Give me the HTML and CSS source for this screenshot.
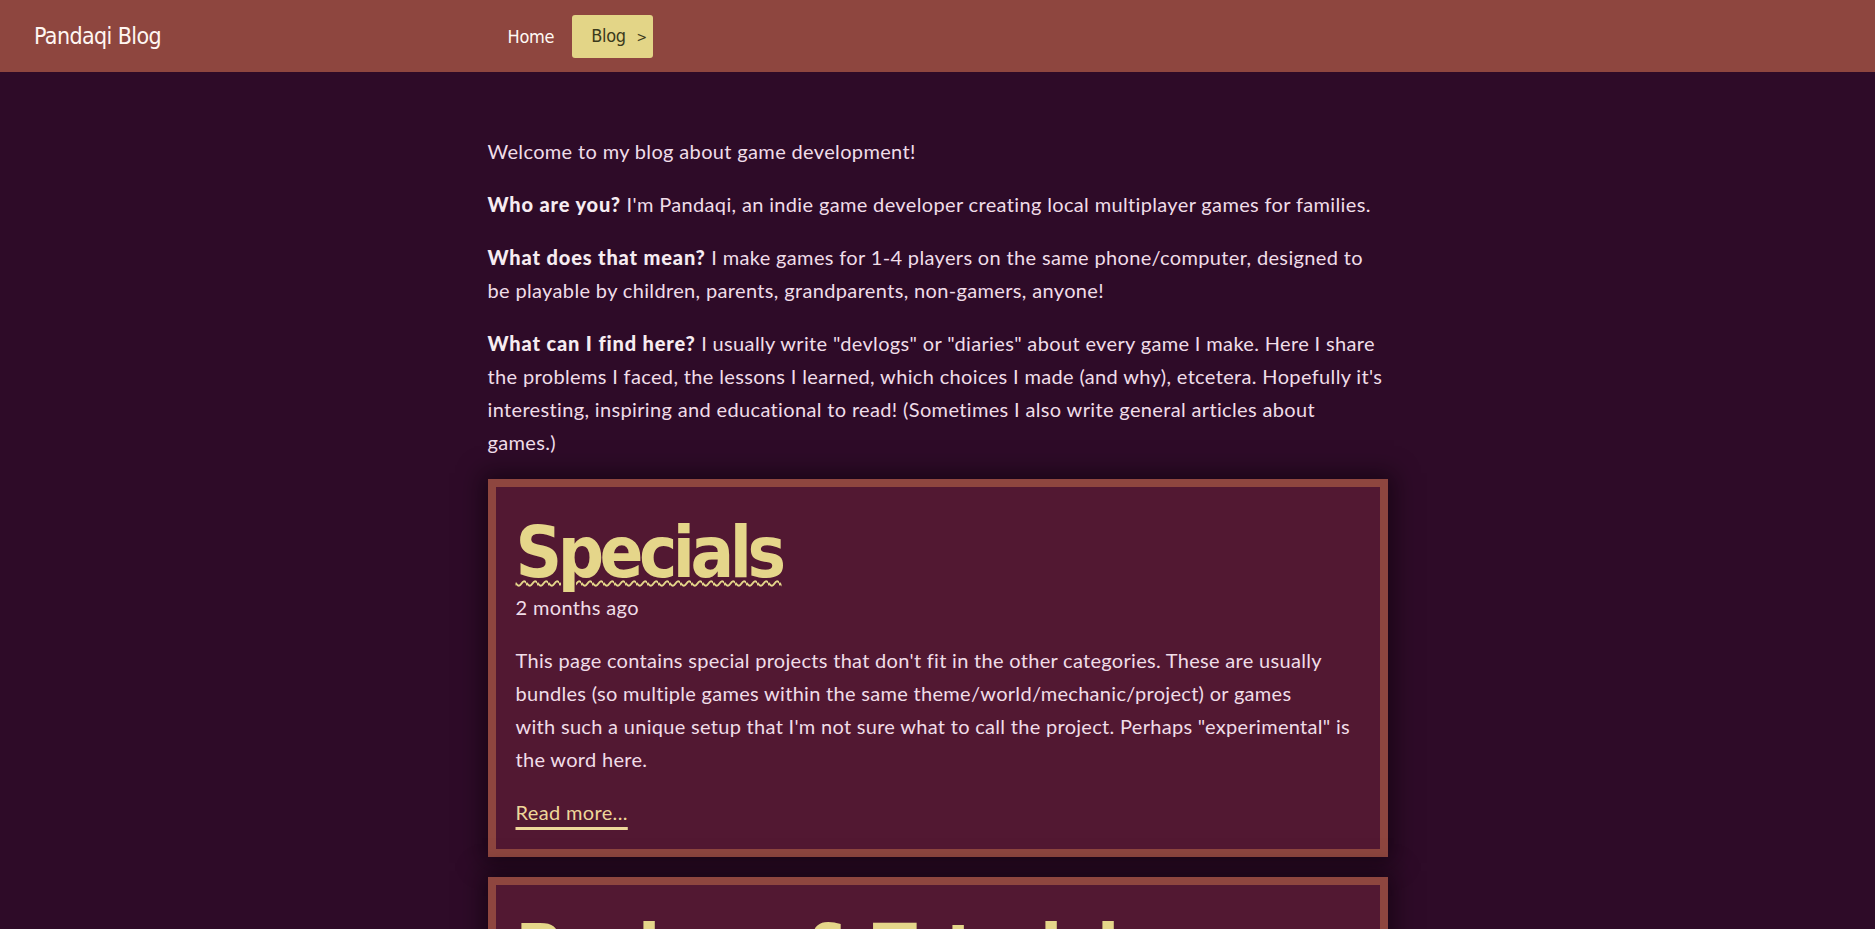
FILE: index.html
```html
<!DOCTYPE html>
<html lang="en">
<head>
<meta charset="utf-8">
<title>Pandaqi Blog</title>
<link rel="stylesheet" href="styles.css">
</head>
<body>
<header class="site-header">
  <a class="logo" href="#">Pandaqi Blog</a>
  <nav class="nav">
    <a class="nav-link" href="#">Home</a>
    <a class="nav-link nav-active" href="#">Blog <span class="arrow">&gt;</span></a>
  </nav>
</header>
<main class="content">
  <p class="intro">Welcome to my blog about game development!</p>
  <p class="intro"><strong>Who are you?</strong> I'm Pandaqi, an indie game developer creating local multiplayer games for families.</p>
  <p class="intro"><strong>What does that mean?</strong> I make games for 1-4 players on the same phone/computer, designed to be playable by children, parents, grandparents, non-gamers, anyone!</p>
  <p class="intro"><strong>What can I find here?</strong> I usually write "devlogs" or "diaries" about every game I make. Here I share the problems I faced, the lessons I learned, which choices I made (and why), etcetera. Hopefully it's interesting, inspiring and educational to read! (Sometimes I also write general articles about games.)</p>

  <article class="card">
    <h2 class="card-title"><a href="#">Specials</a></h2>
    <div class="card-meta">2 months ago</div>
    <p class="card-text">This page contains special projects that don't fit in the other categories. These are usually bundles (so multiple games within the same theme/world/mechanic/project) or games<br>with such a unique setup that I'm not sure what to call the project. Perhaps "experimental" is the word here.</p>
    <a class="read-more" href="#">Read more...</a>
  </article>

  <article class="card">
    <h2 class="card-title"><a href="#">Reviews &amp; Tutorials</a></h2>
    <div class="card-meta">3 months ago</div>
    <p class="card-text">Everything that isn't a devlog about my own games: reviews, tutorials and general articles about game design.</p>
    <a class="read-more" href="#">Read more...</a>
  </article>
</main>
</body>
</html>
```

FILE: styles.css
```css
html, body {
  margin: 0;
  padding: 0;
}

body {
  background: #2e0b28;
  color: #f0dde8;
  font-family: Lato, "Open Sans", sans-serif;
  font-size: 20px;
  line-height: 33px;
  letter-spacing: 0.35px;
}

a {
  color: inherit;
  text-decoration: none;
}

.site-header {
  height: 72px;
  background: #8e463f;
  display: grid;
  grid-template-columns: 1fr 900px 1fr;
  align-items: center;
}

.logo {
  padding-left: 34px;
  font-family: "Liberation Sans Narrow", "DejaVu Sans Condensed", sans-serif;
  font-size: 23px;
  letter-spacing: -0.6px;
  color: #fff6f2;
}

.nav {
  display: flex;
  align-items: center;
}

.nav-link {
  font-family: "Liberation Sans Narrow", "DejaVu Sans Condensed", sans-serif;
  font-size: 18px;
  letter-spacing: -0.3px;
  color: #fffaf5;
  padding: 0 18px 0 20px;
  line-height: 41px;
}

.nav-active {
  background: #e3d587;
  color: #3b3a1c;
  border-radius: 3px;
  padding: 0 6px 0 19px;
}

.arrow {
  font-size: 14px;
  margin-left: 6px;
}

.content {
  width: 900px;
  margin: 0 auto;
  padding-top: 63px;
}

.intro {
  margin: 0 0 20px;
}

.intro strong {
  font-weight: 900;
  letter-spacing: 0.85px;
  color: #f6ecf1;
}

.card {
  background: #521832;
  border: 8px solid #8e463f;
  padding: 20px;
  margin-bottom: 20px;
  box-shadow: 0 0 22px 6px rgba(10, 0, 8, 0.55);
}

.card-title {
  margin: 0;
  padding-top: 7px;
  font-family: "Liberation Sans Narrow", "DejaVu Sans Condensed", sans-serif;
  font-size: 72px;
  line-height: 77px;
  font-weight: 700;
  letter-spacing: -4.5px;
  color: #e5d68a;
}

.card-title a {
  text-decoration: underline wavy #e5d68a;
  text-decoration-thickness: 1.5px;
  text-underline-offset: 3px;
}

.card-meta {
  margin: 0;
}

.card-text {
  margin: 20px 0;
  letter-spacing: 0.3px;
}

.read-more {
  color: #eed79a;
  text-decoration: underline;
  text-decoration-thickness: 3px;
  text-underline-offset: 7px;
}
```
